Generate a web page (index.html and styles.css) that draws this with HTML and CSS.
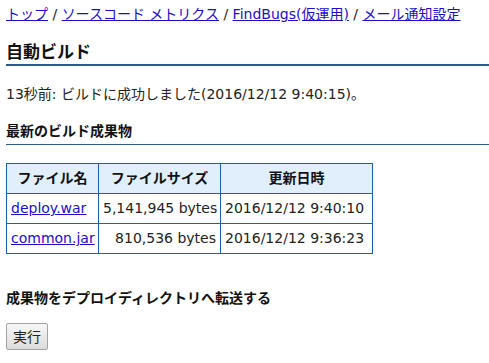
FILE: index.html
```html
<!DOCTYPE html>
<html lang="ja">
<head>
<meta charset="utf-8">
<title>自動ビルド</title>
<link rel="stylesheet" href="styles.css">
</head>
<body>
<div class="page">
  <nav class="breadcrumb">
    <a href="#">トップ</a> / <a href="#">ソースコード メトリクス</a> / <a href="#">FindBugs(仮運用)</a> / <a href="#">メール通知設定</a>
  </nav>
  <h2 class="title">自動ビルド</h2>
  <p class="status">13秒前: ビルドに成功しました(2016/12/12 9:40:15)。</p>
  <h3 class="section">最新のビルド成果物</h3>
  <table class="artifacts">
    <colgroup>
      <col class="c-name">
      <col class="c-size">
      <col class="c-date">
    </colgroup>
    <thead>
      <tr><th>ファイル名</th><th>ファイルサイズ</th><th>更新日時</th></tr>
    </thead>
    <tbody>
      <tr><td><a href="#">deploy.war</a></td><td class="num">5,141,945 bytes</td><td>2016/12/12 9:40:10</td></tr>
      <tr><td><a href="#">common.jar</a></td><td class="num">810,536 bytes</td><td>2016/12/12 9:36:23</td></tr>
    </tbody>
  </table>
  <h4 class="deploy-title">成果物をデプロイディレクトリへ転送する</h4>
  <button class="btn" type="button">実行</button>
</div>
</body>
</html>
```

FILE: styles.css
```css
html, body {
  margin: 0;
  padding: 0;
  background: #ffffff;
}
body {
  font-family: "DejaVu Sans", "Noto Sans CJK JP", sans-serif;
  font-size: 14px;
  line-height: 20px;
  color: #222222;
}
.page {
  padding: 4px 0 0 6px;
}
a {
  color: #1a0dcc;
  text-decoration: underline;
}
.breadcrumb {
  display: block;
  height: 20px;
}
.title {
  margin: 16px 0 0 0;
  font-size: 17px;
  line-height: 24px;
  font-weight: bold;
  color: #111111;
  border-bottom: 2px solid #2b5a86;
  padding-bottom: 0;
}
.status {
  margin: 18px 0 0 0;
}
.section {
  margin: 17px 0 0 0;
  font-size: 14px;
  line-height: 20px;
  font-weight: bold;
  color: #111111;
  padding-bottom: 3px;
  border-bottom: 1px solid #2b5a86;
}
.artifacts {
  margin-top: 18px;
  border-collapse: collapse;
  table-layout: fixed;
  width: 367px;
}
.c-name { width: 92px; }
.c-size { width: 122px; }
.c-date { width: 152px; }
.artifacts th,
.artifacts td {
  border: 1px solid #1561b5;
  padding: 4px 4px 5px;
  line-height: 20px;
  white-space: nowrap;
  overflow: hidden;
}
.artifacts th {
  background: #e1effd;
  font-weight: bold;
  text-align: center;
  color: #111111;
}
.artifacts td {
  text-align: left;
}
.artifacts td.num {
  text-align: right;
}
.deploy-title {
  margin: 34px 0 0 0;
  font-size: 14px;
  line-height: 20px;
  font-weight: bold;
  color: #111111;
}
.btn {
  margin-top: 15px;
  font-family: "DejaVu Sans", "Noto Sans CJK JP", sans-serif;
  font-size: 14px;
  line-height: 20px;
  height: 27px;
  padding: 0 6px;
  color: #222222;
  background: linear-gradient(#f7f7f7, #dcdcdc);
  border: 1px solid #a3a3a3;
  border-radius: 2px;
}
```
